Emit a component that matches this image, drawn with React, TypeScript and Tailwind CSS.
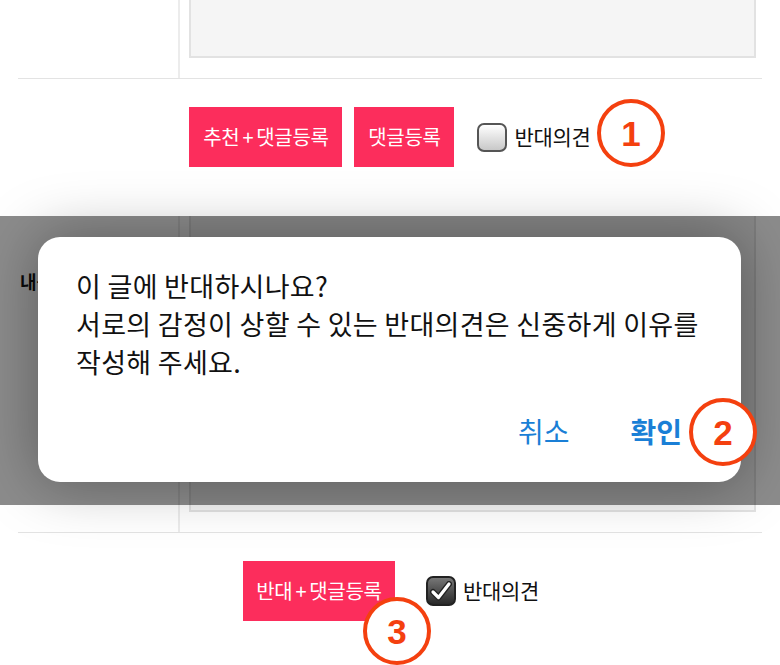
import React from "react";

const FONT = { fontFamily: '"Noto Sans CJK KR", "Noto Sans", sans-serif' };

function Marker({ n, className }: { n: number; className: string }) {
  return (
    <div
      className={`absolute flex h-[68px] w-[68px] items-center justify-center rounded-full border-[4px] border-[#f4400f] bg-white text-[35px] font-bold leading-none text-[#f4400f] ${className}`}
      style={{ fontFamily: '"Liberation Sans", Arial, sans-serif' }}
    >
      {n}
    </div>
  );
}

function CheckBox({ checked }: { checked?: boolean }) {
  if (checked) {
    return (
      <span className="flex h-[30px] w-[30px] items-center justify-center rounded-[7px] border-2 border-[#222] bg-gradient-to-b from-[#777] to-[#2a2a2a]">
        <svg width="22" height="20" viewBox="0 0 22 20">
          <path
            d="M3 11 L8.5 16.5 L19 3"
            fill="none"
            stroke="#222"
            strokeWidth="6"
            strokeLinecap="round"
            strokeLinejoin="round"
          />
          <path
            d="M3 11 L8.5 16.5 L19 3"
            fill="none"
            stroke="#fff"
            strokeWidth="3.2"
            strokeLinecap="round"
            strokeLinejoin="round"
          />
        </svg>
      </span>
    );
  }
  return (
    <span className="block h-[29px] w-[30px] rounded-[7px] border-2 border-[#555] bg-gradient-to-b from-white to-[#c8c8c8]" />
  );
}

function PinkButton({ left, className }: { left?: string; className: string }) {
  return (
    <button
      className={`flex h-[60px] items-center justify-center bg-[#fc2d5c] text-[20px] tracking-[-0.3px] text-white ${className}`}
    >
      {left && (
        <>
          {left}
          <span className="mx-[3px]">+</span>
        </>
      )}
      댓글등록
    </button>
  );
}

export default function App() {
  return (
    <div className="relative h-[665px] w-[780px] overflow-hidden bg-white" style={FONT}>
      {/* upper comment row (textarea cut off at top) */}
      <div className="mx-[18px] flex h-[79px] border-b border-[#e3e3e3]">
        <div className="w-[162px] border-r-2 border-[#ececec]" />
        <div className="pl-[9px]">
          <div className="h-[58px] w-[567px] border-2 border-t-0 border-[#e2e2e2] bg-[#f5f5f5]" />
        </div>
      </div>

      <div className="mt-[28px] flex items-center justify-center">
        <PinkButton left="추천" className="w-[153px]" />
        <PinkButton className="ml-[12px] w-[100px]" />
        <label className="ml-[23px] flex items-center gap-[7px] text-[21px] tracking-[-0.3px] text-[#111]">
          <CheckBox />
          반대의견
        </label>
      </div>

      {/* dimmed area with confirm dialog */}
      <div className="relative mt-[49px]">
        <div className="mx-[18px] flex h-[317px] border-b border-[#e3e3e3]">
          <div className="w-[162px] border-r-2 border-[#ececec] pl-[2px] pt-[52px] text-[18px] font-bold text-[#111]">
            내용
          </div>
          <div className="pl-[9px]">
            <div className="h-[296px] w-[567px] border-2 border-t-0 border-[#e2e2e2] bg-[#f5f5f5]" />
          </div>
        </div>

        <div className="absolute left-0 top-0 h-[289px] w-full bg-black/45" />

        <div className="absolute left-[38px] top-[21px] h-[245px] w-[703px] rounded-[22px] bg-white pl-[38px] pt-[30px] shadow-[0_0_60px_rgba(0,0,0,0.35)]">
          <p className="text-[27px] leading-[38px] tracking-[0.3px] text-[#111]">
            이 글에 반대하시나요?
            <br />
            서로의 감정이 상할 수 있는 반대의견은 신중하게 이유를
            <br />
            작성해 주세요.
          </p>
          <div className="mt-[30px] flex justify-end gap-[61px] pr-[59px] text-[28px] leading-[40px] text-[#1a7fd6]">
            <span>취소</span>
            <span className="font-bold">확인</span>
          </div>
        </div>
      </div>

      <div className="mt-[28px] flex items-center justify-center pl-[2px]">
        <PinkButton left="반대" className="w-[152px]" />
        <label className="ml-[31px] flex items-center gap-[7px] text-[21px] tracking-[-0.3px] text-[#111]">
          <CheckBox checked />
          반대의견
        </label>
      </div>

      <Marker n={1} className="left-[597px] top-[99px]" />
      <Marker n={2} className="left-[689px] top-[398px]" />
      <Marker n={3} className="left-[363px] top-[597px]" />
    </div>
  );
}
